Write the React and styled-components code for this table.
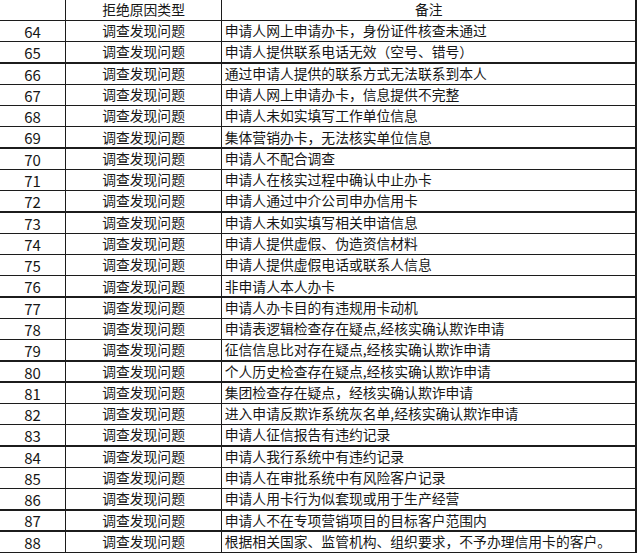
import styled, { createGlobalStyle } from 'styled-components';

const GlobalStyle = createGlobalStyle`
  html, body {
    margin: 0;
    padding: 0;
    background: #fff;
  }
  body {
    font-family: "Noto Sans CJK SC", "Noto Sans", sans-serif;
    color: #151515;
  }
`;

const rows = [
  [64, '申请人网上申请办卡，身份证件核查未通过'],
  [65, '申请人提供联系电话无效（空号、错号）'],
  [66, '通过申请人提供的联系方式无法联系到本人'],
  [67, '申请人网上申请办卡，信息提供不完整'],
  [68, '申请人未如实填写工作单位信息'],
  [69, '集体营销办卡，无法核实单位信息'],
  [70, '申请人不配合调查'],
  [71, '申请人在核实过程中确认中止办卡'],
  [72, '申请人通过中介公司申办信用卡'],
  [73, '申请人未如实填写相关申谙信息'],
  [74, '申请人提供虚假、伪造资信材料'],
  [75, '申请人提供虚假电话或联系人信息'],
  [76, '非申请人本人办卡'],
  [77, '申请人办卡目的有违规用卡动机'],
  [78, '申请表逻辑检查存在疑点,经核实确认欺诈申请'],
  [79, '征信信息比对存在疑点,经核实确认欺诈申请'],
  [80, '个人历史检查存在疑点,经核实确认欺诈申请'],
  [81, '集团检查存在疑点，经核实确认欺诈申请'],
  [82, '进入申请反欺诈系统灰名单,经核实确认欺诈申请'],
  [83, '申请人征信报告有违约记录'],
  [84, '申请人我行系统中有违约记录'],
  [85, '申请人在审批系统中有风险客户记录'],
  [86, '申请人用卡行为似套现或用于生产经营'],
  [87, '申请人不在专项营销项目的目标客户范围内'],
  [88, '根据相关国家、监管机构、组织要求，不予办理信用卡的客户。'],
];

/* lines are the dark background showing through the gaps */
const Sheet = styled.div`
  display: grid;
  grid-template-columns: 65px 154.4px 413.2px;
  grid-template-rows: 19.3px repeat(25, 19.9px);
  gap: 1.4px;
  width: max-content;
  margin-top: -1px;
  padding: 1.4px 1.4px 1.4px 0;
  background: #1c1c1c;
`;

const Cell = styled.div`
  background: #fff;
  display: flex;
  align-items: center;
  justify-content: ${(p) => (p.$left ? 'flex-start' : 'center')};
  padding-left: ${(p) => (p.$left ? '2.6px' : '0')};
  font-size: 13.8px;
  line-height: 1;
  white-space: nowrap;
  overflow: hidden;
  color: #161616;
`;

const NumCell = styled(Cell)`
  font-size: 15px;
  padding-top: 1px;
`;

const App = () => {
  return (
    <>
      <GlobalStyle />
      <Sheet>
        <Cell />
        <Cell>拒绝原因类型</Cell>
        <Cell>备注</Cell>
        {rows.map(([n, note]) => (
          <Row key={n} n={n} note={note} />
        ))}
      </Sheet>
    </>
  );
};

const Row = ({ n, note }) => (
  <>
    <NumCell>{n}</NumCell>
    <Cell>调查发现问题</Cell>
    <Cell $left>{note}</Cell>
  </>
);

export default App;
